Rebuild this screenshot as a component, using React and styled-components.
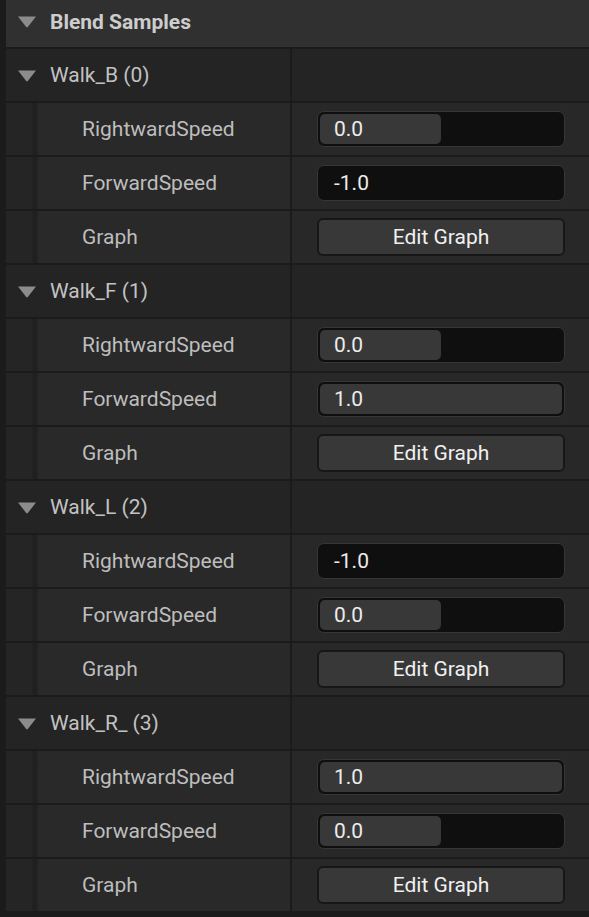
import React from "react";
import styled, { createGlobalStyle } from "styled-components";

const groups = [
  { name: "Walk_B (0)", rightward: 0, forward: -1 },
  { name: "Walk_F (1)", rightward: 0, forward: 1 },
  { name: "Walk_L (2)", rightward: -1, forward: 0 },
  { name: "Walk_R_ (3)", rightward: 1, forward: 0 },
];

const GlobalStyle = createGlobalStyle`
  html, body {
    margin: 0;
    padding: 0;
    background: #1b1b1b;
  }
  body {
    font-family: Roboto, "Noto Sans", "Liberation Sans", sans-serif;
  }
`;

const Arrow = () => (
  <ArrowSvg viewBox="0 0 20 13" width="20" height="13">
    <path d="M1 1.5 L19 1.5 L10.8 12 Q10 12.8 9.2 12 Z" fill="#8c8c8c" />
  </ArrowSvg>
);

// range is -1..1, the bar shows where the value sits
const SliderField = ({ value }) => {
  const pct = Math.max(0, Math.min(1, (value + 1) / 2)) * 100;
  return (
    <Field>
      <Track>{pct > 0 && <Fill style={{ width: `${pct}%` }} />}</Track>
      <Value>{value.toFixed(1)}</Value>
    </Field>
  );
};

const App = () => {
  return (
    <>
      <GlobalStyle />
      <Panel>
        <Header>
          <Arrow />
          <HeaderTitle>Blend Samples</HeaderTitle>
        </Header>
        {groups.map((g) => (
          <React.Fragment key={g.name}>
            <Row>
              <GroupCell>
                <Arrow />
                <GroupTitle>{g.name}</GroupTitle>
              </GroupCell>
              <ValueCell $group />
            </Row>
            <Row>
              <NameCell>
                <Indent />
                <Label>RightwardSpeed</Label>
              </NameCell>
              <ValueCell>
                <SliderField value={g.rightward} />
              </ValueCell>
            </Row>
            <Row>
              <NameCell>
                <Indent />
                <Label>ForwardSpeed</Label>
              </NameCell>
              <ValueCell>
                <SliderField value={g.forward} />
              </ValueCell>
            </Row>
            <Row>
              <NameCell>
                <Indent />
                <Label>Graph</Label>
              </NameCell>
              <ValueCell>
                <EditButton>Edit Graph</EditButton>
              </ValueCell>
            </Row>
          </React.Fragment>
        ))}
      </Panel>
    </>
  );
};

const Panel = styled.div`
  display: flex;
  flex-direction: column;
  gap: 2px;
  padding-left: 6px;
  background: #1b1b1b;
  min-height: 917px;
  box-sizing: border-box;
`;

const ArrowSvg = styled.svg`
  display: block;
  flex-shrink: 0;
`;

const Header = styled.div`
  height: 47px;
  display: flex;
  align-items: center;
  gap: 13px;
  padding: 0 0 4px 11px;
  box-sizing: border-box;
  background: #303030;
`;

const HeaderTitle = styled.span`
  font-size: 21px;
  font-weight: 700;
  color: #cdcdcd;
`;

const Row = styled.div`
  display: grid;
  grid-template-columns: 284px 1fr;
  column-gap: 2px;
  height: 52px;
`;

const GroupCell = styled.div`
  display: flex;
  align-items: center;
  gap: 13px;
  padding-left: 11px;
  background: #242424;
`;

const GroupTitle = styled.span`
  font-size: 21px;
  color: #c2c2c2;
`;

const NameCell = styled.div`
  display: flex;
  background: #292929;
`;

const Indent = styled.div`
  width: 32px;
  flex-shrink: 0;
  background: linear-gradient(to right, #252525 0, #252525 26px, #1f1f1f 27px, #222 32px);
`;

const Label = styled.span`
  display: flex;
  align-items: center;
  padding-left: 44px;
  font-size: 21px;
  color: #bdbdbd;
`;

const ValueCell = styled.div`
  display: flex;
  align-items: center;
  padding-left: 25px;
  background: ${({ $group }) => ($group ? "#242424" : "#282828")};
`;

const Field = styled.div`
  position: relative;
  display: flex;
  align-items: center;
  width: 248px;
  height: 36px;
  box-sizing: border-box;
  border: 1px solid #363636;
  border-radius: 7px;
  background: #0f0f0f;
`;

const Track = styled.div`
  position: absolute;
  inset: 2px;
`;

const Fill = styled.div`
  height: 100%;
  border-radius: 5px;
  background: #383838;
`;

const Value = styled.span`
  position: relative;
  padding-left: 16px;
  font-size: 21px;
  color: #ececec;
`;

const EditButton = styled.button`
  width: 248px;
  height: 38px;
  box-sizing: border-box;
  border: 2px solid #171717;
  border-radius: 6px;
  background: #383838;
  color: #f0f0f0;
  font-family: Roboto, "Noto Sans", "Liberation Sans", sans-serif;
  font-size: 21px;
  padding: 0;
  cursor: pointer;
`;

export default App;
